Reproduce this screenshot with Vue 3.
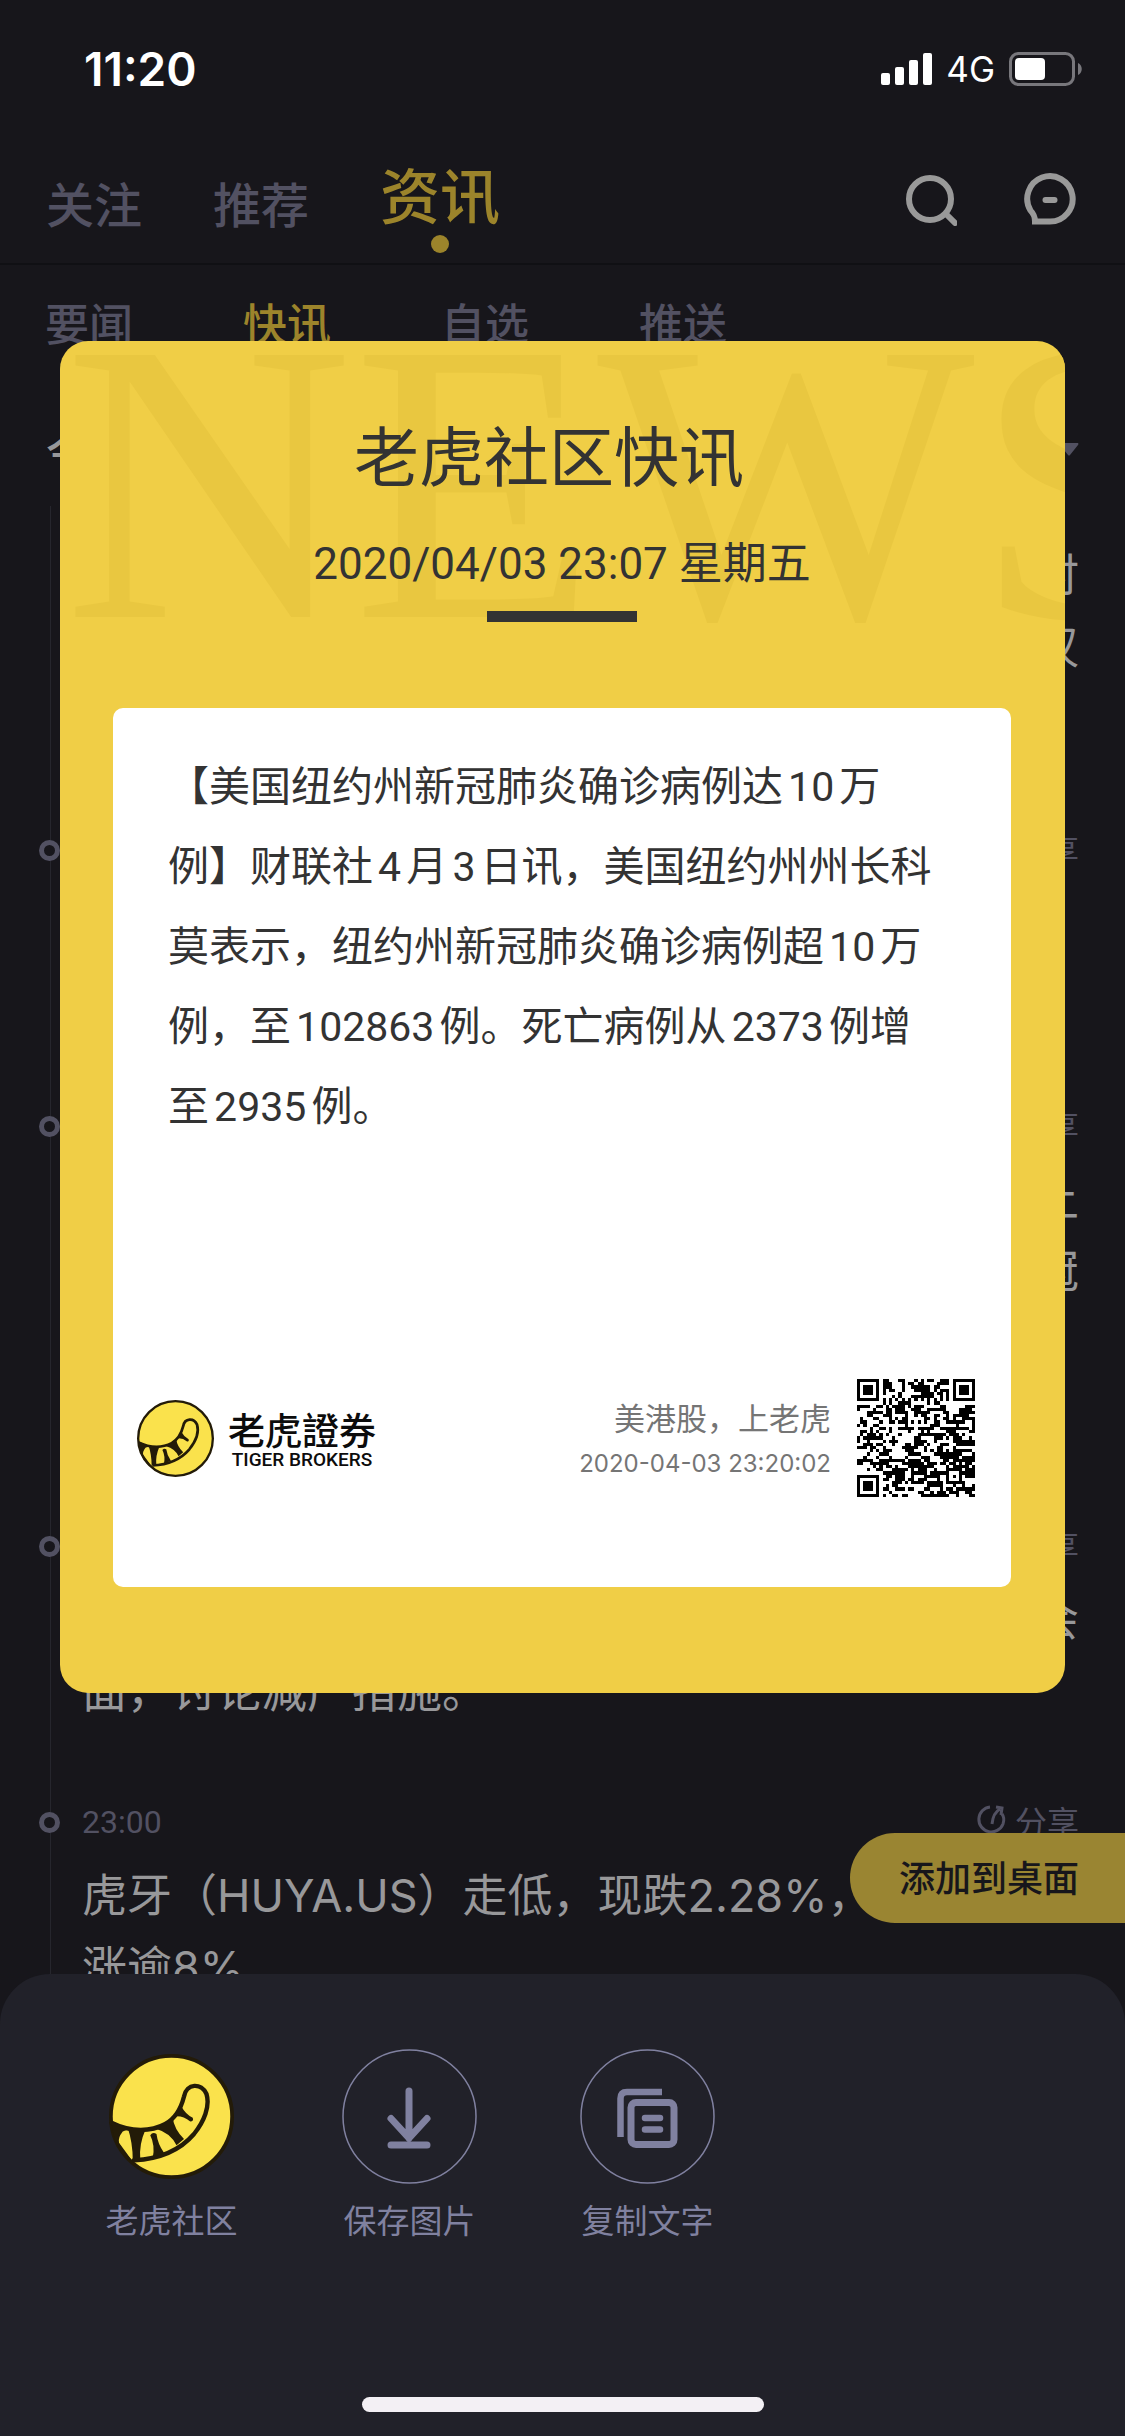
<script setup>
import { ref } from "vue";

const tabs = ["关注", "推荐", "资讯"];
const subTabs = ["要闻", "快讯", "自选", "推送"];
const activeTab = ref("资讯");
const activeSub = ref("快讯");

// 快讯列表
const feed = [
  { time: "", lines: [{ text: "时", end: true }, { text: "汉", end: true }, { text: "" }] },
  { time: "23:06", lines: [{ text: "" }, { text: "" }] },
  {
    time: "23:05",
    lines: [{ text: "上", end: true }, { text: "冠", end: true }, { text: "" }, { text: "" }],
  },
  { time: "23:03", lines: [{ text: "会", end: true }, { text: "面，讨论减产措施。" }] },
  {
    time: "23:00",
    lines: [{ text: "虎牙（HUYA.US）走低，现跌2.28%，" }, { text: "涨逾8%" }],
  },
];

const newsLines = [
  "【美国纽约州新冠肺炎确诊病例达10万",
  "例】财联社4月3日讯，美国纽约州州长科",
  "莫表示，纽约州新冠肺炎确诊病例超10万",
  "例，至102863例。死亡病例从2373例增",
  "至2935例。",
];

// 二维码
const QR_SIZE = 37;

// 定位图案：外圈和中心为黑色
const isMarkerDark = (x, y, left, top, size) => {
  const half = (size - 1) / 2;
  const ring = Math.max(Math.abs(x - left - half), Math.abs(y - top - half));
  return ring === half || ring <= half - 2;
};

const buildQr = () => {
  let seed = 20200403;
  let path = "";
  const random = () => {
    seed = (seed * 16807) % 2147483647;
    return seed / 2147483647;
  };
  for (let y = 0; y < QR_SIZE; y++) {
    let prev = false;
    for (let x = 0; x < QR_SIZE; x++) {
      let dark = random() < 0.2 ? prev : random() < 0.54;
      prev = dark;
      const left = x < 8;
      const right = x > QR_SIZE - 9;
      const top = y < 8;
      const bottom = y > QR_SIZE - 9;
      if ((left && (top || bottom)) || (right && top)) {
        const ox = left ? 0 : QR_SIZE - 7;
        const oy = top ? 0 : QR_SIZE - 7;
        const inside = x >= ox && x < ox + 7 && y >= oy && y < oy + 7;
        dark = inside && isMarkerDark(x, y, ox, oy, 7);
      } else if (x >= 28 && x <= 32 && y >= 28 && y <= 32) {
        dark = isMarkerDark(x, y, 28, 28, 5);
      } else if (x === 6 || y === 6) {
        dark = (x + y) % 2 === 0;
      }
      if (dark) path += `M${x} ${y}h1v1h-1z`;
    }
  }
  return path;
};

const qrPath = buildQr();
</script>

<template>
  <div class="app">
    <div class="status-bar">
      <span class="clock">11:20</span>
      <div class="status-right">
        <svg class="signal" viewBox="0 0 51 32">
          <rect x="0" y="20" width="9" height="12" rx="2" />
          <rect x="14" y="14" width="9" height="18" rx="2" />
          <rect x="28" y="7" width="9" height="25" rx="2" />
          <rect x="42" y="0" width="9" height="32" rx="2" />
        </svg>
        <span class="network">4G</span>
        <svg class="battery" viewBox="0 0 73 34">
          <rect x="1.5" y="1.5" width="63" height="31" rx="8" fill="none" stroke="#78777c" stroke-width="3" />
          <rect x="6" y="6" width="30" height="22" rx="4" fill="#fff" />
          <path d="M69 11c5 2 5 10 0 12z" fill="#78777c" />
        </svg>
      </div>
    </div>

    <header class="header">
      <nav class="tabs">
        <button
          v-for="tab in tabs"
          :key="tab"
          class="tab"
          :class="{ active: tab === activeTab }"
          @click="activeTab = tab"
        >
          {{ tab }}
        </button>
      </nav>
      <div class="header-icons">
        <button class="icon-btn" aria-label="搜索">
          <svg viewBox="0 0 54 54">
            <circle cx="27" cy="27" r="21" />
            <path d="M43 42l9 9" />
          </svg>
        </button>
        <button class="icon-btn" aria-label="消息">
          <svg viewBox="0 0 54 54">
            <path d="M12 49.500H27A22.700 22.700 0 1 0 7.500 38.500Q12 43 12 49.500Z" />
            <path d="M22.500 28h9" />
          </svg>
        </button>
      </div>
    </header>

    <nav class="sub-tabs">
      <button
        v-for="tab in subTabs"
        :key="tab"
        class="sub-tab"
        :class="{ active: tab === activeSub }"
        @click="activeSub = tab"
      >
        {{ tab }}
      </button>
    </nav>

    <div class="filter">
      <span>今天</span>
      <svg class="caret" viewBox="0 0 20 13"><path d="M1 0h18q1 1 0 2l-8 10q-1 1-2 0L1 2q-1-1 0-2z" /></svg>
    </div>

    <main class="feed">
      <article v-for="(item, index) in feed" :key="index" class="item">
        <div class="item-head">
          <template v-if="item.time">
            <i class="dot"></i>
            <time>{{ item.time }}</time>
            <button class="share">
              <svg viewBox="0 0 30 32">
                <path d="M13 3A12.500 12.500 0 1 0 26 20Q28 14 25 10" />
                <path d="M15 20Q16 9 23 5M19 3l6 1l-1 7" />
              </svg>
              分享
            </button>
          </template>
        </div>
        <p v-for="(line, i) in item.lines" :key="i" class="line" :class="{ end: line.end }">
          {{ line.text }}
        </p>
      </article>
    </main>

    <button class="add-desktop">添加到桌面</button>

    <section class="poster">
      <div class="watermark" aria-hidden="true">NEWS</div>
      <h1 class="poster-title">老虎社区快讯</h1>
      <p class="poster-date">2020/04/03 23:07 星期五</p>
      <div class="poster-bar"></div>
      <div class="panel">
        <div class="news">
          <p v-for="line in newsLines" :key="line">{{ line }}</p>
        </div>
        <footer class="panel-foot">
          <svg class="brand-logo" viewBox="0 0 100 100"><use href="#tiger" /></svg>
          <div class="brand">
            <span class="brand-cn">老虎證券</span>
            <span class="brand-en">TIGER BROKERS</span>
          </div>
          <div class="slogan">
            <span class="slogan-text">美港股，上老虎</span>
            <span class="slogan-time">2020-04-03 23:20:02</span>
          </div>
          <svg class="qr" viewBox="0 0 37 37" shape-rendering="crispEdges">
            <path :d="qrPath" />
          </svg>
        </footer>
      </div>
    </section>

    <section class="sheet">
      <div class="actions">
        <button class="action">
          <svg viewBox="0 0 135 135">
            <svg x="5" y="5" width="125" height="125" viewBox="0 0 100 100">
              <g id="tiger">
                <circle cx="50" cy="50" r="48.500" fill="#fae24c" stroke="#231b08" stroke-width="3" />
                <path
                  d="M2 55C18 63 34 62 45 56C54 51 58 42 60 34C62 23 74 23 78 32C81 42 76 54 68 64C56 78 40 84 20 85"
                  fill="none"
                  stroke="#231b08"
                  stroke-width="3.500"
                />
                <g fill="#231b08" stroke="none">
                  <path d="M2 54L16 60L11 62Q7 67 8 71L19 86L13 83Q3 72 2 54Z" />
                  <path d="M15 59L29 61Q24 72 25 84L19 85Q19 71 15 59Z" />
                  <path d="M33 65Q35 62 38 64Q39 72 44 79L35 83Q37 73 33 65Z" />
                  <path d="M38 60L51 51Q52 60 60 68L54 73Q49 63 38 60Z" />
                  <path d="M52 50L58 42Q61 48 67 51Q68 54 65 54Q59 49 52 50Z" />
                </g>
              </g>
            </svg>
          </svg>
          <span>老虎社区</span>
        </button>
        <button class="action">
          <svg viewBox="0 0 135 135">
            <circle cx="67.500" cy="67.500" r="66.500" stroke-width="1.500" />
            <path d="M67 42v47M49 69.500l18 19.500l18-19.500M49 96h36" stroke-width="7" />
          </svg>
          <span>保存图片</span>
        </button>
        <button class="action">
          <svg viewBox="0 0 135 135">
            <circle cx="67.500" cy="67.500" r="66.500" stroke-width="1.500" />
            <rect x="51" y="53.500" width="43" height="42" rx="5" stroke-width="7" />
            <path d="M82 43H47Q40.500 43 40.500 49.500V88" stroke-width="6.500" stroke-linecap="butt" />
            <path d="M65 69h15M65 80.500h15" stroke-width="6.500" />
          </svg>
          <span>复制文字</span>
        </button>
      </div>
      <div class="home-indicator"></div>
    </section>
  </div>
</template>

<style>
body {
  background: #17161b;
}
</style>

<style scoped>
.app {
  position: relative;
  min-height: 100vh;
  overflow: hidden;
  background: #17161b;
  color: #98989a;
  font-family: Roboto, "Noto Sans CJK SC", sans-serif;
}

button {
  padding: 0;
  border: 0;
  background: none;
  color: inherit;
  font: inherit;
  cursor: pointer;
}

p,
h1 {
  margin: 0;
}

svg {
  display: block;
  flex: none;
}

.status-bar {
  display: flex;
  align-items: center;
  justify-content: space-between;
  height: 138px;
  padding: 0 43px 0 84px;
  color: #fff;
  font-family: Inter, sans-serif;
}

.clock {
  font-size: 46px;
  font-weight: 600;
}

.status-right {
  display: flex;
  align-items: center;
  gap: 14px;
}

.signal {
  width: 51px;
  height: 32px;
  fill: #fff;
}

.network {
  font-size: 35px;
}

.battery {
  width: 73px;
  height: 34px;
}

.header {
  display: flex;
  align-items: center;
  justify-content: space-between;
  height: 127px;
  padding: 0 48px 4px 46px;
  border-bottom: 2px solid #101014;
  box-sizing: border-box;
}

.tabs {
  display: flex;
  align-items: flex-end;
  gap: 71px;
}

.tab {
  position: relative;
  color: #525162;
  font-size: 48px;
  font-weight: 500;
  line-height: 72px;
}

.tab.active {
  color: #9c842b;
  font-size: 60px;
  line-height: 88px;
}

.tab.active::after {
  content: "";
  position: absolute;
  left: 50%;
  bottom: -10px;
  width: 18px;
  height: 18px;
  margin-left: -9px;
  border-radius: 50%;
  background: #9c842b;
}

.header-icons {
  display: flex;
  gap: 66px;
}

.icon-btn svg {
  width: 54px;
  height: 54px;
  fill: none;
  stroke: #999;
  stroke-width: 6;
  stroke-linecap: round;
}

.sub-tabs {
  display: flex;
  align-items: center;
  gap: 110px;
  height: 113px;
  padding: 0 45px 6px;
}

.sub-tab {
  color: #525162;
  font-size: 44px;
  font-weight: 500;
}

.sub-tab.active {
  color: #9c842b;
}

.filter {
  display: flex;
  align-items: center;
  justify-content: space-between;
  height: 34px;
  padding: 48px 46px 0;
  font-size: 42px;
  font-weight: 500;
}

.caret {
  width: 20px;
  height: 13px;
  fill: #525162;
}

.item {
  position: relative;
  padding: 0 46px 58px 82px;
}

.item::before {
  content: "";
  position: absolute;
  top: 0;
  bottom: 0;
  left: 50px;
  width: 1px;
  background: #26262d;
}

.item:first-child::before {
  top: 40px;
}

.item-head {
  display: flex;
  align-items: center;
  justify-content: space-between;
  height: 72px;
  margin-bottom: 2px;
  color: #525162;
  font-size: 32px;
}

.dot {
  position: absolute;
  left: 39px;
  width: 11px;
  height: 11px;
  border: 5px solid #525162;
  border-radius: 50%;
  background: #17161b;
}

.share {
  display: flex;
  align-items: center;
  gap: 8px;
  padding-bottom: 4px;
}

.share svg {
  width: 30px;
  height: 32px;
  fill: none;
  stroke: #525162;
  stroke-width: 3;
}

.line {
  height: 72px;
  font-family: Inter, "Noto Sans CJK SC", sans-serif;
  font-size: 45px;
  line-height: 72px;
  white-space: nowrap;
}

.line.end {
  text-align: right;
}

.add-desktop {
  position: absolute;
  top: 1833px;
  right: 0;
  height: 90px;
  padding: 0 46px 5px 49px;
  border-radius: 45px 0 0 45px;
  background: #9a8532;
  color: #17161b;
  font-size: 36px;
  font-weight: 500;
}

.poster {
  position: absolute;
  top: 341px;
  right: 60px;
  left: 60px;
  overflow: hidden;
  padding: 74px 54px 106px 53px;
  border-radius: 28px;
  background: #f0ce46;
  color: #333;
  text-align: center;
}

.watermark {
  position: absolute;
  top: -98px;
  left: 4px;
  color: #e9c740;
  font-family: "Liberation Serif", serif;
  font-size: 400px;
  line-height: 480px;
}

.poster-title {
  position: relative;
  padding-right: 26px;
  font-size: 65px;
  font-weight: 400;
  line-height: 88px;
}

.poster-date {
  position: relative;
  margin-top: 31px;
  font-size: 44px;
  line-height: 60px;
}

.poster-bar {
  position: relative;
  width: 150px;
  height: 11px;
  margin: 17px auto 86px;
  background: #333;
}

.panel {
  position: relative;
  display: flex;
  flex-direction: column;
  justify-content: space-between;
  gap: 232px;
  padding: 39px 36px 90px 24px;
  border-radius: 10px;
  background: #fff;
  text-align: left;
}

.news {
  padding-left: 31px;
  font-size: 41px;
  line-height: 80px;
  white-space: nowrap;
  text-autospace: normal;
  text-spacing-trim: space-all;
}

.panel-foot {
  display: flex;
  align-items: center;
}

.brand-logo {
  width: 77px;
  height: 77px;
}

.brand {
  display: flex;
  flex-direction: column;
  align-items: center;
  margin-left: 14px;
  padding-top: 4px;
  color: #0c0c0c;
}

.brand-cn {
  font-family: "Noto Sans CJK TC", sans-serif;
  font-size: 37px;
  font-weight: 500;
  line-height: 40px;
}

.brand-en {
  font-size: 19px;
  font-weight: 500;
  line-height: 22px;
}

.slogan {
  display: flex;
  flex-direction: column;
  align-items: flex-end;
  margin-left: auto;
  padding-top: 7px;
  color: #757575;
}

.slogan-text {
  font-size: 31px;
  line-height: 44px;
}

.slogan-time {
  font-family: Inter, sans-serif;
  font-size: 24px;
  line-height: 44px;
}

.qr {
  width: 118px;
  height: 118px;
  margin-left: 26px;
  fill: #000;
}

.sheet {
  position: fixed;
  right: 0;
  bottom: 0;
  left: 0;
  padding: 75px 104px 24px;
  border-radius: 50px 50px 0 0;
  background: #212129;
}

.actions {
  display: flex;
  gap: 103px;
}

.action {
  display: flex;
  flex-direction: column;
  align-items: center;
  gap: 14px;
  color: #8081a0;
  font-size: 33px;
  line-height: 48px;
}

.action > svg {
  width: 135px;
  height: 135px;
  fill: none;
  stroke: #8081a0;
  stroke-linecap: round;
}

.home-indicator {
  width: 402px;
  height: 15px;
  margin: 151px auto 0;
  border-radius: 8px;
  background: #f3f0f4;
}
</style>
